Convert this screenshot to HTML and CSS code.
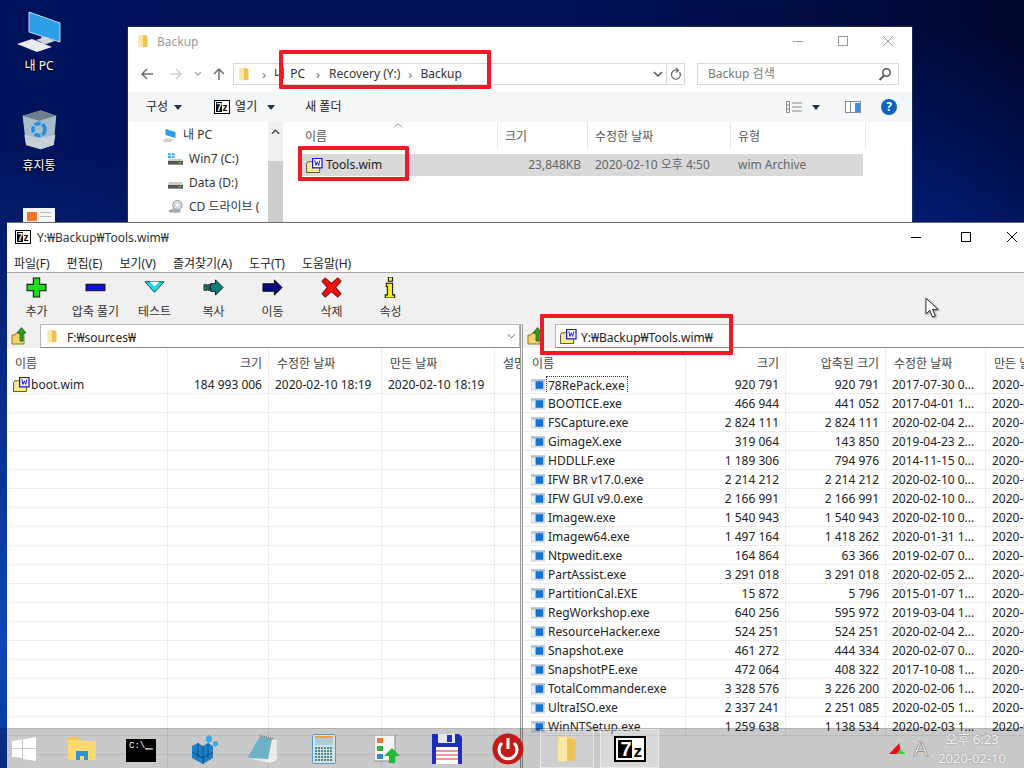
FILE: index.html
```html
<!DOCTYPE html>
<html lang="ko">
<head>
<meta charset="utf-8">
<title>Backup</title>
<link rel="stylesheet" href="styles.css">
</head>
<body>
<svg class="defs" width="0" height="0">
  <defs>
    <symbol id="folder" viewBox="0 0 16 16"><path d="M3 1h7l3 1.500v12l-7 0.500H3z" fill="#f6d77c"/><path d="M3 1h5v14H3z" fill="#fbe7a6"/><path d="M8 1.500l5 1v12l-5 .5z" fill="#edc453"/></symbol>
    <symbol id="wim" viewBox="0 0 18 16"><path d="M.5 6l1.500-2h4l1 1h7.500v10.500H.5z" fill="#f7ea8e" stroke="#55522a"/><rect x="7" y=".5" width="10" height="10" fill="#fff" stroke="#1414d8" stroke-width="1.300"/><path d="M9.300 2.500l1.200 5.500 1.500-4 1.500 4 1.200-5.500" fill="none" stroke="#1414d8"/></symbol>
    <symbol id="exe" viewBox="0 0 15 12"><rect width="15" height="12" fill="#d3dbe4"/><rect x="0" y="0" width="15" height="2" fill="#aebccb"/><rect x="5" y="2" width="8" height="8" fill="#0f74d8"/><rect x="1" y="3" width="3" height="7" fill="#eef2f6"/></symbol>
    <symbol id="up" viewBox="0 0 18 20"><path d="M1 9h3l1-2h8v11H3l-2 0z" fill="#f4d26c" stroke="#8b7a2c"/><path d="M9 15V7H6l4.500-5.500L15 7h-3v8z" fill="#2fa51f" stroke="#175c12" stroke-width=".8"/></symbol>
  </defs>
</svg>

<div class="desktop">
  <div class="shortcut shortcut-pc">
    <svg class="shortcut-icon" viewBox="0 0 44 44"><path d="M12 1l31 11v19L12 21z" fill="#2d9fe8" stroke="#c6d5df"/><path d="M24 25l8 3v4l-6 1-2-1z" fill="#aab4bb"/><path d="M19 29l9-3 10 4-9 3z" fill="#cfd6db"/><path d="M0 33l15-5 20 8-15 5z" fill="#e8ebee"/></svg>
    <span>내 PC</span>
  </div>
  <div class="shortcut shortcut-bin">
    <svg class="shortcut-icon" viewBox="0 0 44 48"><path d="M3 8l21-6 18 6-3 34-15 5-17-5z" fill="#a7bccb"/><path d="M3 8l21-6 18 6-20 6z" fill="#6f7f8a"/><path d="M5 30l17 4 19-4-2 12-15 5-17-5z" fill="#c5d0d8"/><circle cx="22" cy="24" r="7" fill="none" stroke="#1f8fe0" stroke-width="4" stroke-dasharray="7 2"/></svg>
    <span>휴지통</span>
  </div>
  <div class="shortcut-doc"><i></i><b></b></div>

  <section class="explorer">
    <div class="ex-title">
      <svg class="ic14" viewBox="0 0 16 16"><use href="#folder"/></svg>
      <span class="ex-title-text">Backup</span>
      <div class="ex-controls">
        <svg viewBox="0 0 10 10"><path d="M0 5.500h10" stroke="#9a9a9a" fill="none"/></svg>
        <svg viewBox="0 0 10 10"><rect x=".5" y=".5" width="9" height="9" fill="none" stroke="#9a9a9a"/></svg>
        <svg viewBox="0 0 10 10"><path d="M0 0l10 10M10 0L0 10" stroke="#9a9a9a" fill="none"/></svg>
      </div>
    </div>
    <div class="ex-nav">
      <svg class="nav-ic" viewBox="0 0 14 14"><path d="M13 7H2M7 2L2 7l5 5" stroke="#6f6f6f" stroke-width="1.500" fill="none"/></svg>
      <svg class="nav-ic nav-fwd" viewBox="0 0 14 14"><path d="M1 7h11M7 2l5 5-5 5" stroke="#d3d3d3" stroke-width="1.500" fill="none"/></svg>
      <svg class="nav-drop" viewBox="0 0 8 6"><path d="M1 1l3 3 3-3" stroke="#a8a8a8" fill="none" stroke-width="1.300"/></svg>
      <svg class="nav-ic nav-upa" viewBox="0 0 14 14"><path d="M7 13V2M2 7l5-5 5 5" stroke="#6f6f6f" stroke-width="1.500" fill="none"/></svg>
      <div class="addr">
        <svg class="ic14" viewBox="0 0 16 16"><use href="#folder"/></svg>
        <span class="crumb-sep sep-first">›</span><span class="crumb c1">내 PC</span><span class="crumb-sep">›</span><span class="crumb">Recovery (Y:)</span><span class="crumb-sep sep-last">›</span><span class="crumb">Backup</span>
        <svg class="addr-drop" viewBox="0 0 10 8"><path d="M1 2l4 4 4-4" stroke="#555" fill="none" stroke-width="1.500"/></svg>
        <span class="addr-div"></span>
        <svg class="addr-ref" viewBox="0 0 12 14"><path d="M9.500 5a4.500 4.500 0 1 1-3-1.800H8M6 1l2.500 2.200L6 5.500" stroke="#707070" fill="none" stroke-width="1.300"/></svg>
      </div>
      <div class="search">
        <span>Backup 검색</span>
        <svg viewBox="0 0 14 14"><circle cx="8.500" cy="5.500" r="3.700" fill="none" stroke="#555" stroke-width="1.500"/><path d="M6 8.500L1.500 13" stroke="#555" stroke-width="2"/></svg>
      </div>
    </div>
    <div class="ex-tools">
      <span class="tool-a">구성</span><i class="caret"></i>
      <svg class="logo-small tool-b" viewBox="0 0 16 14"><rect width="16" height="14" fill="#000"/><rect x="1" y="1" width="14" height="12" fill="#fff"/><rect x="2" y="2" width="6" height="10" fill="#000"/><text x="2.600" y="10.500" class="logo-t7">7</text><text x="8.500" y="11" class="logo-tz">z</text></svg>
      <span class="tool-c">열기</span><i class="caret caret-wide"></i>
      <span class="tool-d">새 폴더</span>
      <div class="tools-right">
        <svg class="vw" viewBox="0 0 16 12"><path d="M.5.500h3v11h-3zM.5 4h3M.5 8h3M6 2h10M6 6h10M6 10h10" stroke="#8a8a8a" fill="none"/></svg>
        <i class="caret"></i>
        <svg class="pane" viewBox="0 0 16 12"><rect x=".5" y=".5" width="15" height="11" fill="#fff" stroke="#7f8c99"/><rect x="10" y="2" width="5" height="9" fill="#3a8fe0"/><path d="M5.500 1v10" stroke="#7f8c99"/></svg>
        <span class="help">?</span>
      </div>
    </div>
    <div class="ex-main">
      <aside class="tree">
        <div class="tree-items">
          <div class="tree-item t-pc"><svg viewBox="0 0 14 14"><path d="M3 1l10 3v6L3 7z" fill="#2d9fe8"/><path d="M0 12l5-2 6 2-3 2H2z" fill="#c8cdd2"/></svg><span>내 PC</span></div>
          <div class="tree-item"><svg viewBox="0 0 16 14"><path d="M0 9h16v4H0z" fill="#555"/><path d="M1 7h14l1 2H0z" fill="#c9c9c9"/><path d="M0 1h3v2H0zM4 1h3v2H4zM0 4h3v2H0zM4 4h3v2H4z" fill="#1f9be0"/><rect x="11" y="10.500" width="3" height="1" fill="#7ddc4d"/></svg><span>Win7 (C:)</span></div>
          <div class="tree-item"><svg viewBox="0 0 16 14"><path d="M0 9h16v4H0z" fill="#555"/><path d="M1 6h14l1 3H0z" fill="#c9c9c9"/><rect x="11" y="10.500" width="3" height="1" fill="#7ddc4d"/></svg><span>Data (D:)</span></div>
          <div class="tree-item"><svg viewBox="0 0 16 14"><circle cx="10" cy="5" r="5" fill="#d5dbe0" stroke="#8b9299"/><circle cx="10" cy="5" r="1.500" fill="#fff"/><path d="M0 11l6-3 8 2-2 3H2z" fill="#a8adb2"/></svg><span>CD 드라이브 (</span></div>
        </div>
        <div class="tree-scroll"><svg viewBox="0 0 10 6"><path d="M1 5l4-4 4 4" stroke="#444" fill="none" stroke-width="1.500"/></svg><div class="thumb"></div></div>
      </aside>
      <div class="ex-files">
        <div class="ex-head">
          <span class="h-name">이름<svg class="sort" viewBox="0 0 10 5"><path d="M1 4.500l4-4 4 4" stroke="#999" fill="none"/></svg></span>
          <span class="h-size">크기</span>
          <span class="h-date">수정한 날짜</span>
          <span class="h-type">유형</span>
        </div>
        <div class="ex-row">
          <span class="h-name r-name"><svg class="wim-ic" viewBox="0 0 18 16"><use href="#wim"/></svg>Tools.wim</span>
          <span class="r-size">23,848KB</span>
          <span class="h-date r-gray">2020-02-10 오후 4:50</span>
          <span class="h-type r-gray">wim Archive</span>
        </div>
      </div>
    </div>
  </section>

  <section class="sevenzip">
    <div class="z-title">
      <svg class="logo-small" viewBox="0 0 16 14"><rect width="16" height="14" fill="#000"/><rect x="1" y="1" width="14" height="12" fill="#fff"/><rect x="2" y="2" width="6" height="10" fill="#000"/><text x="2.600" y="10.500" class="logo-t7">7</text><text x="8.500" y="11" class="logo-tz">z</text></svg>
      <span class="z-title-text">Y:₩Backup₩Tools.wim₩</span>
      <div class="z-controls">
        <svg viewBox="0 0 10 10"><path d="M0 5.500h10" stroke="#000" fill="none"/></svg>
        <svg viewBox="0 0 10 10"><rect x=".5" y=".5" width="9" height="9" fill="none" stroke="#000"/></svg>
        <svg viewBox="0 0 10 10"><path d="M0 0l10 10M10 0L0 10" stroke="#000" fill="none"/></svg>
      </div>
    </div>
    <nav class="z-menu"><span>파일(F)</span><span>편집(E)</span><span>보기(V)</span><span>즐겨찾기(A)</span><span>도구(T)</span><span>도움말(H)</span></nav>
    <div class="z-tools">
      <div class="zt"><svg viewBox="0 0 20 20"><path d="M7 1h6v6h6v6h-6v6H7v-6H1V7h6z" fill="#18e018" stroke="#111"/></svg><span>추가</span></div>
      <div class="zt"><svg viewBox="0 0 20 20"><path d="M1 7h18v6H1z" fill="#0c10d8" stroke="#111"/></svg><span>압축 풀기</span></div>
      <div class="zt"><svg viewBox="0 0 22 20"><path d="M1 4h20l-10 11z" fill="#11e4e4" stroke="#333"/><path d="M6 4h10l-5 5z" fill="#fff"/></svg><span>테스트</span></div>
      <div class="zt"><svg viewBox="0 0 22 20"><path d="M1 7h3v6H1zM5 7h2v6H5z" fill="#0e8080" stroke="#111" stroke-width=".8"/><path d="M8 6h5V2l8 8-8 8v-4H8z" fill="#0e8080" stroke="#111"/></svg><span>복사</span></div>
      <div class="zt"><svg viewBox="0 0 22 20"><path d="M1 6h12V2l8 8-8 8v-4H1z" fill="#0a0a80" stroke="#111"/></svg><span>이동</span></div>
      <div class="zt"><svg viewBox="0 0 20 20"><path d="M4 1l6 5 6-5 3 3-5 6 5 6-3 3-6-5-6 5-3-3 5-6-5-6z" fill="#ee1111" stroke="#811"/></svg><span>삭제</span></div>
      <div class="zt"><svg viewBox="0 0 20 20"><path d="M8 0h4v4H8zM6 6h6v11h2v3H5v-3h2v-8H6z" fill="#f4f010" stroke="#111"/></svg><span>속성</span></div>
    </div>
    <div class="z-panels">
      <div class="panel panel-left">
        <div class="pathbar">
          <svg class="up-ic" viewBox="0 0 18 20"><use href="#up"/></svg>
          <div class="combo">
            <svg class="ic14" viewBox="0 0 16 16"><use href="#folder"/></svg>
            <span class="combo-text">F:₩sources₩</span>
            <svg class="combo-drop" viewBox="0 0 10 6"><path d="M1 1l4 4 4-4" stroke="#555" fill="none"/></svg>
          </div>
        </div>
        <div class="list list-l">
          <div class="lrow lhead"><span>이름</span><span class="num">크기</span><span>수정한 날짜</span><span>만든 날짜</span><span>설명</span></div>
          <div class="lrow"><span class="fname"><svg class="wim-ic" viewBox="0 0 18 16"><use href="#wim"/></svg>boot.wim</span><span class="num">184 993 006</span><span>2020-02-10 18:19</span><span>2020-02-10 18:19</span><span></span></div>
          <div class="lrow"><span></span><span></span><span></span><span></span><span></span></div>
          <div class="lrow"><span></span><span></span><span></span><span></span><span></span></div>
          <div class="lrow"><span></span><span></span><span></span><span></span><span></span></div>
          <div class="lrow"><span></span><span></span><span></span><span></span><span></span></div>
          <div class="lrow"><span></span><span></span><span></span><span></span><span></span></div>
          <div class="lrow"><span></span><span></span><span></span><span></span><span></span></div>
          <div class="lrow"><span></span><span></span><span></span><span></span><span></span></div>
          <div class="lrow"><span></span><span></span><span></span><span></span><span></span></div>
          <div class="lrow"><span></span><span></span><span></span><span></span><span></span></div>
          <div class="lrow"><span></span><span></span><span></span><span></span><span></span></div>
          <div class="lrow"><span></span><span></span><span></span><span></span><span></span></div>
          <div class="lrow"><span></span><span></span><span></span><span></span><span></span></div>
          <div class="lrow"><span></span><span></span><span></span><span></span><span></span></div>
          <div class="lrow"><span></span><span></span><span></span><span></span><span></span></div>
          <div class="lrow"><span></span><span></span><span></span><span></span><span></span></div>
          <div class="lrow"><span></span><span></span><span></span><span></span><span></span></div>
          <div class="lrow"><span></span><span></span><span></span><span></span><span></span></div>
          <div class="lrow"><span></span><span></span><span></span><span></span><span></span></div>
          <div class="lrow"><span></span><span></span><span></span><span></span><span></span></div>
          <div class="lrow"><span></span><span></span><span></span><span></span><span></span></div>
        </div>
      </div>
      <div class="panel panel-right">
        <div class="pathbar">
          <svg class="up-ic" viewBox="0 0 18 20"><use href="#up"/></svg>
          <div class="combo">
            <svg class="wim-ic" viewBox="0 0 18 16"><use href="#wim"/></svg>
            <span class="combo-text">Y:₩Backup₩Tools.wim₩</span>
            <svg class="combo-drop" viewBox="0 0 10 6"><path d="M1 1l4 4 4-4" stroke="#555" fill="none"/></svg>
          </div>
        </div>
        <div class="list list-r">
          <div class="lrow lhead"><span>이름</span><span class="num">크기</span><span class="num">압축된 크기</span><span>수정한 날짜</span><span>만든 날짜</span></div>
          <div class="lrow"><span class="fname"><svg class="exe-ic"><use href="#exe"/></svg><em class="focus">78RePack.exe</em></span><span class="num">920 791</span><span class="num">920 791</span><span>2017-07-30 0...</span><span>2020-02-10 ...</span></div>
          <div class="lrow"><span class="fname"><svg class="exe-ic"><use href="#exe"/></svg>BOOTICE.exe</span><span class="num">466 944</span><span class="num">441 052</span><span>2017-04-01 1...</span><span>2020-02-10 ...</span></div>
          <div class="lrow"><span class="fname"><svg class="exe-ic"><use href="#exe"/></svg>FSCapture.exe</span><span class="num">2 824 111</span><span class="num">2 824 111</span><span>2020-02-04 2...</span><span>2020-02-10 ...</span></div>
          <div class="lrow"><span class="fname"><svg class="exe-ic"><use href="#exe"/></svg>GimageX.exe</span><span class="num">319 064</span><span class="num">143 850</span><span>2019-04-23 2...</span><span>2020-02-10 ...</span></div>
          <div class="lrow"><span class="fname"><svg class="exe-ic"><use href="#exe"/></svg>HDDLLF.exe</span><span class="num">1 189 306</span><span class="num">794 976</span><span>2014-11-15 0...</span><span>2020-02-10 ...</span></div>
          <div class="lrow"><span class="fname"><svg class="exe-ic"><use href="#exe"/></svg>IFW BR v17.0.exe</span><span class="num">2 214 212</span><span class="num">2 214 212</span><span>2020-02-10 0...</span><span>2020-02-10 ...</span></div>
          <div class="lrow"><span class="fname"><svg class="exe-ic"><use href="#exe"/></svg>IFW GUI v9.0.exe</span><span class="num">2 166 991</span><span class="num">2 166 991</span><span>2020-02-10 0...</span><span>2020-02-10 ...</span></div>
          <div class="lrow"><span class="fname"><svg class="exe-ic"><use href="#exe"/></svg>Imagew.exe</span><span class="num">1 540 943</span><span class="num">1 540 943</span><span>2020-02-10 0...</span><span>2020-02-10 ...</span></div>
          <div class="lrow"><span class="fname"><svg class="exe-ic"><use href="#exe"/></svg>Imagew64.exe</span><span class="num">1 497 164</span><span class="num">1 418 262</span><span>2020-01-31 1...</span><span>2020-02-10 ...</span></div>
          <div class="lrow"><span class="fname"><svg class="exe-ic"><use href="#exe"/></svg>Ntpwedit.exe</span><span class="num">164 864</span><span class="num">63 366</span><span>2019-02-07 0...</span><span>2020-02-10 ...</span></div>
          <div class="lrow"><span class="fname"><svg class="exe-ic"><use href="#exe"/></svg>PartAssist.exe</span><span class="num">3 291 018</span><span class="num">3 291 018</span><span>2020-02-05 2...</span><span>2020-02-10 ...</span></div>
          <div class="lrow"><span class="fname"><svg class="exe-ic"><use href="#exe"/></svg>PartitionCal.EXE</span><span class="num">15 872</span><span class="num">5 796</span><span>2015-01-07 1...</span><span>2020-02-10 ...</span></div>
          <div class="lrow"><span class="fname"><svg class="exe-ic"><use href="#exe"/></svg>RegWorkshop.exe</span><span class="num">640 256</span><span class="num">595 972</span><span>2019-03-04 1...</span><span>2020-02-10 ...</span></div>
          <div class="lrow"><span class="fname"><svg class="exe-ic"><use href="#exe"/></svg>ResourceHacker.exe</span><span class="num">524 251</span><span class="num">524 251</span><span>2020-02-04 2...</span><span>2020-02-10 ...</span></div>
          <div class="lrow"><span class="fname"><svg class="exe-ic"><use href="#exe"/></svg>Snapshot.exe</span><span class="num">461 272</span><span class="num">444 334</span><span>2020-02-07 0...</span><span>2020-02-10 ...</span></div>
          <div class="lrow"><span class="fname"><svg class="exe-ic"><use href="#exe"/></svg>SnapshotPE.exe</span><span class="num">472 064</span><span class="num">408 322</span><span>2017-10-08 1...</span><span>2020-02-10 ...</span></div>
          <div class="lrow"><span class="fname"><svg class="exe-ic"><use href="#exe"/></svg>TotalCommander.exe</span><span class="num">3 328 576</span><span class="num">3 226 200</span><span>2020-02-06 1...</span><span>2020-02-10 ...</span></div>
          <div class="lrow"><span class="fname"><svg class="exe-ic"><use href="#exe"/></svg>UltraISO.exe</span><span class="num">2 337 241</span><span class="num">2 251 085</span><span>2020-02-05 1...</span><span>2020-02-10 ...</span></div>
          <div class="lrow"><span class="fname"><svg class="exe-ic"><use href="#exe"/></svg>WinNTSetup.exe</span><span class="num">1 259 638</span><span class="num">1 138 534</span><span>2020-02-03 1...</span><span>2020-02-10 ...</span></div>
        </div>
      </div>
    </div>
  </section>

  <div class="mark mark-addr"></div>
  <div class="mark mark-file"></div>
  <div class="mark mark-path"></div>

  <svg class="cursor" viewBox="0 0 16 22"><path d="M1 1v17l4-4 3 7 3-1-3-7h6z" fill="#fff" stroke="#222"/></svg>

  <footer class="taskbar">
    <svg class="tb tb-win" viewBox="0 0 24 24"><path d="M0 4l10-1.500V11H0zM11 2.300L24 0v11H11zM0 12h10v9L0 19.800zM11 12h13v12l-13-2z" fill="#fff"/></svg>
    <svg class="tb tb-folder" viewBox="0 0 30 26"><path d="M1 3h11l2 2h15v19H1z" fill="#fbd96f"/><path d="M1 1h11l2 3H1z" fill="#f1c74c"/><path d="M9 24v-9h12v9h-4v-4h-4v4z" fill="#2f93d8"/></svg>
    <svg class="tb tb-cmd" viewBox="0 0 30 26"><rect width="30" height="26" fill="#000"/><rect width="30" height="3" fill="#c9c9c9"/><text x="3" y="12" class="cmd-t">C:\_</text><path d="M19 13h8" stroke="#fff"/></svg>
    <svg class="tb tb-cube" viewBox="0 0 28 30"><path d="M2 12l6-3 5 3 5-3 5 3v12l-10 6-11-6z" fill="#1d7fc4"/><path d="M13 12v18M2 18l11 6 10-6M8 9v15M18 9v15" stroke="#0d4f85" fill="none"/><path d="M16 3l3-2 3 2v4l-3 2-3-2zM23 8l2-1 3 1v3l-3 2-2-2z" fill="#3ca7e6"/></svg>
    <svg class="tb tb-note" viewBox="0 0 30 28"><path d="M0 23L13 1l17 4v20l-7 3z" fill="#e9ecee"/><path d="M0 23L13 1l12 3-4 20z" fill="#6fb1c6"/><path d="M13 1l14 3" stroke="#777" stroke-width="2" stroke-dasharray="1 1"/></svg>
    <svg class="tb tb-calc" viewBox="0 0 24 30"><rect x=".5" y=".5" width="23" height="29" rx="1" fill="#cfe2f0" stroke="#5b9ac8"/><rect x="3" y="4" width="18" height="7" fill="#aecbe0"/><path d="M3 3h18" stroke="#f0a030" stroke-width="2"/><path d="M3 14h18M3 17h18M3 20h18M3 23h18M3 26h18" stroke="#587" stroke-width="2" stroke-dasharray="2 1"/></svg>
    <svg class="tb tb-list" viewBox="0 0 28 28"><rect x="0" y="0" width="21" height="26" fill="#f4f4f4" stroke="#888"/><rect x="3" y="3" width="6" height="5" fill="#ee7a20"/><rect x="3" y="11" width="6" height="5" fill="#31b030"/><rect x="3" y="19" width="6" height="5" fill="#2f88d8"/><path d="M18 13l8 8h-5v7h-6v-7h-5z" fill="#27b83a"/></svg>
    <svg class="tb tb-disk" viewBox="0 0 32 32"><path d="M1 1h27l3 3v27H1z" fill="#1d2fb8"/><rect x="7" y="1" width="17" height="9" fill="#e6e6ef"/><rect x="16" y="2" width="5" height="7" fill="#1d2fb8"/><rect x="5" y="14" width="22" height="17" fill="#fff"/><path d="M5 18h22M5 22h22M5 26h22" stroke="#d3303a"/></svg>
    <svg class="tb tb-power" viewBox="0 0 32 32"><circle cx="16" cy="16" r="15.500" fill="#c41a1a"/><path d="M10 10a9 9 0 1 0 12 0" fill="none" stroke="#fff" stroke-width="3"/><path d="M16 5v11" stroke="#fff" stroke-width="3"/></svg>
    <div class="tb-btn tb-btn-folder"><svg class="tb-btn-ic" viewBox="0 0 16 16"><use href="#folder"/></svg></div>
    <div class="tb-btn tb-btn-zip"><svg class="bigz" viewBox="0 0 32 26"><rect width="32" height="26" fill="#000"/><rect x="2" y="2" width="28" height="22" fill="#fff"/><rect x="4" y="4" width="14" height="18" fill="#000"/><text x="6.500" y="20" class="bigz-7">7</text><text x="19.500" y="21" class="bigz-z">z</text></svg></div>
    <div class="tray">
      <svg class="tray-flag" viewBox="0 0 18 14"><path d="M0 13l11-12 1 7-4 5z" fill="#e5101e"/><path d="M8 13l4-5 6 5z" fill="#33d333"/></svg>
      <span class="tray-a">A</span>
      <div class="clock"><span>오후 6:23</span><span>2020-02-10</span></div>
    </div>
  </footer>
</div>
</body>
</html>
```

FILE: styles.css
```css
* { box-sizing: border-box; }
html, body { margin: 0; padding: 0; }
body { font: 12px/1 "Noto Sans", "Noto Sans CJK KR", sans-serif; color: #222; overflow: hidden; }
.defs { position: absolute; }
.desktop {
  position: relative; width: 1024px; height: 768px; overflow: hidden;
  background:
    radial-gradient(ellipse 420px 500px at 0 640px, #0d46b8 0, rgba(13,70,184,0) 100%),
    radial-gradient(ellipse 300px 300px at 910px 320px, #00238a 0, rgba(0,35,138,0) 100%),
    linear-gradient(90deg, #01135c 0, #01125a 55%, #000a3c 85%, #00052a 100%);
}
svg { display: block; flex: none; }

/* desktop shortcuts */
.shortcut { position: absolute; left: 8px; width: 62px; display: flex; flex-direction: column; align-items: center; color: #fff; text-shadow: 0 1px 2px #000, 0 0 2px #000; }
.shortcut-icon { width: 44px; height: 44px; }
.shortcut span { margin-top: 5px; }
.shortcut-pc { top: 11px; }
.shortcut-bin { top: 108px; }
.shortcut-bin .shortcut-icon { width: 38px; height: 43px; }
.shortcut-bin span { margin-top: 9px; }
.shortcut-doc { position: absolute; left: 23px; top: 208px; width: 32px; height: 16px; background: #f4f4f4; padding: 4px; display: flex; gap: 3px; }
.shortcut-doc i { width: 10px; height: 9px; background: #f2762e; }
.shortcut-doc b { flex: 1; height: 5px; border-top: 1px solid #bbb; border-bottom: 1px solid #bbb; }

/* explorer */
.explorer { position: absolute; left: 128px; top: 27px; width: 784px; height: 195px; background: #fff; display: flex; flex-direction: column; box-shadow: 0 0 0 1px rgba(60,70,90,.5); }
.ic14 { width: 14px; height: 14px; }
.ex-title { height: 28px; flex: none; display: flex; align-items: center; padding-left: 8px; }
.ex-title-text { margin-left: 7px; color: #9b9b9b; padding-top: 1px; }
.ex-controls { margin-left: auto; display: flex; gap: 35px; margin-right: 19px; }
.ex-controls svg { width: 10px; height: 10px; }
.ex-nav { height: 37px; flex: none; display: flex; align-items: flex-start; padding-top: 8px; }
.nav-ic { width: 14px; height: 14px; margin: 4px 0 0 12px; }
.nav-fwd { margin-left: 15px; }
.nav-drop { width: 8px; height: 6px; margin: 8px 0 0 11px; }
.nav-upa { margin-left: 10px; }
.addr { margin-left: 7px; width: 452px; height: 22px; border: 1px solid #d9d9d9; display: flex; align-items: center; padding-left: 3px; color: #333; white-space: nowrap; }
.crumb-sep { color: #777; margin: 0 9px 0 11px; font-size: 13px; }
.sep-first { margin-left: 11px; margin-right: 8px; }
.c1 { word-spacing: 2px; }
.sep-last { margin-left: 8px; margin-right: 8px; }
.addr-drop { width: 10px; height: 8px; margin-left: auto; }
.addr-div { width: 1px; height: 20px; background: #d9d9d9; margin-left: 3px; }
.addr-ref { width: 12px; height: 14px; margin-left: 3px; margin-right: 2px; }
.search { margin-left: 12px; width: 202px; height: 22px; border: 1px solid #d9d9d9; display: flex; align-items: center; justify-content: space-between; padding: 0 6px 0 10px; color: #777; }
.search svg { width: 14px; height: 14px; }
.ex-tools { height: 30px; flex: none; background: #f5f6f7; display: flex; align-items: center; padding-left: 18px; }
.caret { width: 0; height: 0; border: 4px solid transparent; border-top: 5px solid #1f3550; border-bottom: 0; margin-left: 6px; }
.caret-wide { margin-left: 10px; }
.logo-small { width: 16px; height: 14px; }
.logo-t7 { font: bold 10px "Liberation Sans", sans-serif; fill: #fff; }
.logo-tz { font: bold 10px "Liberation Sans", sans-serif; fill: #000; }
.tool-b { margin-left: 32px; }
.tool-c { margin-left: 5px; }
.tool-d { margin-left: 30px; }
.tools-right { margin-left: auto; display: flex; align-items: center; margin-right: 15px; }
.vw { width: 16px; height: 12px; }
.tools-right .caret { margin-left: 10px; }
.pane { width: 16px; height: 12px; margin-left: 25px; }
.help { width: 16px; height: 16px; border-radius: 50%; background: #0a63c0; color: #fff; font-weight: 700; font-size: 12px; line-height: 16px; text-align: center; margin-left: 20px; }
.ex-main { flex: 1; display: flex; min-height: 0; }
.tree { width: 155px; flex: none; display: flex; overflow: hidden; }
.tree-items { width: 140px; flex: none; overflow: hidden; white-space: nowrap; padding-top: 1px; }
.tree-item { height: 24px; display: flex; align-items: center; padding-left: 40px; gap: 6px; color: #333; }
.tree-item svg { width: 15px; height: 14px; }
.t-pc { padding-left: 34px; }
.tree-scroll { width: 15px; background: #f0f0f0; display: flex; flex-direction: column; align-items: center; padding-top: 7px; }
.tree-scroll svg { width: 9px; height: 6px; }
.thumb { margin-top: 26px; width: 15px; flex: 1; background: #cdcdcd; }
.ex-files { flex: 1; min-width: 0; }
.ex-head { height: 26px; display: flex; align-items: center; color: #555; position: relative; }
.ex-head > span { height: 26px; display: flex; align-items: center; padding-top: 4px; border-right: 1px solid #e5e5e5; flex: none; padding-left: 7px; }
.h-name { width: 215px; padding-left: 22px; position: relative; flex: none; }
.ex-head .h-name { padding-left: 22px; }
.sort { position: absolute; left: 110px; top: 1px; width: 10px; height: 5px; }
.h-size { width: 90px; }
.h-date { width: 143px; }
.h-type { width: 135px; }
.ex-row { margin: 6px 0 0 16px; width: 564px; height: 22px; background: #d9d9d9; display: flex; align-items: center; }
.ex-row span { flex: none; }
.r-name { width: 199px; padding-left: 7px; display: flex; align-items: center; gap: 3px; }
.wim-ic { width: 17px; height: 15px; }
.r-size { width: 83px; text-align: right; color: #666; }
.ex-row .h-date { padding-left: 14px; width: 157px; }
.ex-row .h-type { padding-left: 0; }
.r-gray { color: #666; }

/* 7-zip */
.sevenzip { position: absolute; left: 7px; top: 222px; width: 1030px; height: 546px; background: #fff; border-top: 1px solid #6b6b6b; display: flex; flex-direction: column; }
.z-title { height: 27px; flex: none; display: flex; align-items: center; padding-left: 8px; gap: 6px; color: #333; }
.z-title-text { padding-top: 3px; }
.z-controls { margin-left: auto; display: flex; gap: 36px; margin-right: 20px; }
.z-controls svg { width: 10px; height: 10px; }
.z-controls svg:first-child { margin-right: 4px; }
.z-menu { height: 23px; flex: none; display: flex; align-items: center; gap: 17px; padding: 5px 0 0 7px; border-bottom: 1px solid #a8a8a8; }
.z-tools { height: 51px; flex: none; background: #f0f0f0; display: flex; padding: 4px 0 0 0; }
.zt { width: 59px; display: flex; flex-direction: column; align-items: center; color: #333; gap: 8px; }
.zt svg { width: 21px; height: 21px; }
.z-panels { flex: 1; display: flex; min-height: 0; background: #f0f0f0; }
.panel { flex: none; display: flex; flex-direction: column; min-height: 0; overflow: hidden; }
.panel-left { width: 514px; border-right: 1px solid #9a9a9a; }
.panel-right { flex: 1; margin-left: 1px; border-left: 1px solid #9a9a9a; }
.pathbar { height: 24px; flex: none; display: flex; align-items: center; padding-left: 4px; background: #f0f0f0; }
.up-ic { width: 18px; height: 20px; }
.panel-left .combo { margin-left: 11px; width: 480px; }
.panel-right .combo { margin-left: 10px; flex: 1; gap: 4px; }
.combo { height: 24px; background: #fff; border: 1px solid #b8b8b8; border-bottom-color: #8a8a8a; display: flex; align-items: center; padding-left: 4px; gap: 8px; color: #222; }
.combo-text { padding-top: 3px; }
.combo-drop { width: 9px; height: 6px; margin-left: auto; margin-right: 3px; }
.list { flex: 1; background: #fff; overflow: hidden; padding-top: 1px; }
.lrow { height: 19px; display: grid; border-bottom: 1px solid #ececec; color: #222; white-space: nowrap; }
.list-l .lrow { grid-template-columns: 161px 101px 113px 113px 60px; }
.list-r .lrow { grid-template-columns: 163px 100px 100px 100px 100px; }
.lrow > span { border-right: 1px solid #ececec; line-height: 18px; padding: 1px 0 0 6px; overflow: hidden; min-width: 0; }
.lrow .num { text-align: right; padding: 1px 6px 0 0; }
.lhead { height: 26px; border-bottom: 0; color: #444; }
.lrow.lhead > span { line-height: 24px; padding: 3px 0 0 8px; }
.lrow.lhead > .num { padding: 3px 6px 0 0; }
.list-r .lrow.lhead > span:first-child { padding-left: 9px; }
.lrow .fname { display: flex; align-items: center; padding: 1px 0 0 6px; gap: 1px; }
.list-r .lrow .fname { padding-left: 8px; gap: 3px; }
.exe-ic { width: 14px; height: 12px; }
.focus { font-style: normal; border: 1px dotted #333; border-bottom: 0; padding: 0 2px 0 1px; line-height: 17px; height: 18px; margin-left: -2px; }

/* annotations */
.mark { position: absolute; border: 4px solid #ed1c24; border-radius: 1px; }
.mark-addr { left: 279px; top: 50px; width: 212px; height: 39px; }
.mark-file { left: 298px; top: 146px; width: 111px; height: 35px; }
.mark-path { left: 540px; top: 314px; width: 193px; height: 41px; }
.cursor { position: absolute; left: 925px; top: 297px; width: 15px; height: 21px; filter: drop-shadow(1px 1px 1px rgba(0,0,0,.4)); }

/* taskbar */
.taskbar { position: absolute; left: 0; right: 0; bottom: 0; height: 40px; background: rgba(0,0,0,.21); border-top: 1px solid rgba(0,0,0,.1); display: flex; align-items: center; }
.tb { flex: none; }
.tb-win { width: 24px; height: 24px; margin-left: 12px; }
.tb-folder { width: 30px; height: 26px; margin-left: 31px; }
.tb-cmd { width: 30px; height: 26px; margin-left: 29px; }
.cmd-t { font: 9px "Liberation Mono", monospace; fill: #fff; }
.tb-cube { width: 28px; height: 30px; margin-left: 34px; }
.tb-note { width: 30px; height: 28px; margin-left: 29px; }
.tb-calc { width: 24px; height: 30px; margin-left: 35px; }
.tb-list { width: 28px; height: 28px; margin-left: 38px; }
.tb-disk { width: 32px; height: 32px; margin-left: 29px; }
.tb-power { width: 32px; height: 32px; margin-left: 29px; }
.tb-btn { height: 39px; flex: none; border: 1px solid rgba(255,255,255,.45); display: flex; align-items: center; justify-content: center; background: rgba(255,255,255,.12); }
.tb-btn-folder { width: 54px; margin-left: 16px; }
.tb-btn-zip { width: 59px; margin-left: 6px; background: rgba(255,255,255,.3); }
.tb-btn-ic { width: 28px; height: 28px; }
.bigz { width: 32px; height: 26px; }
.bigz-7 { font: bold 20px "Liberation Sans", sans-serif; fill: #fff; }
.bigz-z { font: bold 17px "Liberation Sans", sans-serif; fill: #000; }
.tray { margin-left: auto; display: flex; align-items: center; padding-right: 18px; }
.tray-flag { width: 17px; height: 13px; }
.tray-a { font: 22px "Liberation Sans", sans-serif; color: #f4f4f4; -webkit-text-stroke: .6px #777; margin-left: 7px; }
.clock { display: flex; flex-direction: column; align-items: center; gap: 6px; margin-left: 10px; color: #f2f2f2; font-size: 13px; text-shadow: 0 0 2px rgba(110,110,110,.7); }
```
